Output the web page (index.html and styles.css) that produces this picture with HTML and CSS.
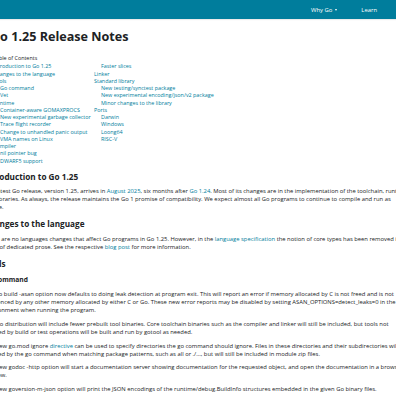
FILE: index.html
```html
<!DOCTYPE html>
<html lang="en">
<head>
    <meta charset="UTF-8">
    <meta name="viewport" content="width=device-width, initial-scale=1.0">
    <title>Go 1.25 Release Notes</title>
    <link rel="stylesheet" href="styles.css">
</head>
<body>
    <header class="site-header">
        <nav class="header-nav">
            <a class="nav-item" href="#">Why Go <span class="caret"></span></a>
            <a class="nav-item" href="#">Learn</a>
            <a class="nav-item" href="#">Docs <span class="caret"></span></a>
            <a class="nav-item" href="#">Packages</a>
        </nav>
    </header>

    <main class="article">
        <h1 class="title">Go 1.25 Release Notes</h1>

        <div class="toc">
            <div class="toc-label">Table of Contents</div>
            <div class="toc-columns">
                <ul class="toc-list">
                    <li><a href="#">Introduction to Go 1.25</a></li>
                    <li><a href="#">Changes to the language</a></li>
                    <li><a href="#">Tools</a></li>
                    <li class="sub"><a href="#">Go command</a></li>
                    <li class="sub"><a href="#">Vet</a></li>
                    <li><a href="#">Runtime</a></li>
                    <li class="sub"><a href="#">Container-aware GOMAXPROCS</a></li>
                    <li class="sub"><a href="#">New experimental garbage collector</a></li>
                    <li class="sub"><a href="#">Trace flight recorder</a></li>
                    <li class="sub"><a href="#">Change to unhandled panic output</a></li>
                    <li class="sub"><a href="#">VMA names on Linux</a></li>
                    <li><a href="#">Compiler</a></li>
                    <li class="sub"><a href="#">nil pointer bug</a></li>
                    <li class="sub"><a href="#">DWARF5 support</a></li>
                </ul>
                <ul class="toc-list">
                    <li class="sub"><a href="#">Faster slices</a></li>
                    <li><a href="#">Linker</a></li>
                    <li><a href="#">Standard library</a></li>
                    <li class="sub"><a href="#">New testing/synctest package</a></li>
                    <li class="sub"><a href="#">New experimental encoding/json/v2 package</a></li>
                    <li class="sub"><a href="#">Minor changes to the library</a></li>
                    <li><a href="#">Ports</a></li>
                    <li class="sub"><a href="#">Darwin</a></li>
                    <li class="sub"><a href="#">Windows</a></li>
                    <li class="sub"><a href="#">Loong64</a></li>
                    <li class="sub"><a href="#">RISC-V</a></li>
                </ul>
            </div>
        </div>

        <section class="notes">
            <h2>Introduction to Go 1.25</h2>
            <p>The latest Go release, version 1.25, arrives in <a href="#">August 2025</a>, six months after <a href="#">Go 1.24</a>. Most of its changes are in the implementation of the toolchain, runtime, and libraries. As always, the release maintains the Go 1 promise of compatibility. We expect almost all Go programs to continue to compile and run as before.</p>

            <h2>Changes to the language</h2>
            <p>There are no languages changes that affect Go programs in Go 1.25. However, in the <a href="#">language specification</a> the notion of core types has been removed in favor of dedicated prose. See the respective <a href="#">blog post</a> for more information.</p>

            <h2>Tools</h2>
            <h3>Go command</h3>
            <p>The go build -asan option now defaults to doing leak detection at program exit. This will report an error if memory allocated by C is not freed and is not referenced by any other memory allocated by either C or Go. These new error reports may be disabled by setting ASAN_OPTIONS=detect_leaks=0 in the environment when running the program.</p>
            <p>The Go distribution will include fewer prebuilt tool binaries. Core toolchain binaries such as the compiler and linker will still be included, but tools not invoked by build or test operations will be built and run by gotool as needed.</p>
            <p>The new go.mod ignore <a href="#">directive</a> can be used to specify directories the go command should ignore. Files in these directories and their subdirectories will be ignored by the go command when matching package patterns, such as all or ./..., but will still be included in module zip files.</p>
            <p>The new godoc -http option will start a documentation server showing documentation for the requested object, and open the documentation in a browser window.</p>
            <p>The new goversion-m-json option will print the JSON encodings of the runtime/debug.BuildInfo structures embedded in the given Go binary files.</p>
        </section>
    </main>
</body>
</html>
```

FILE: styles.css
```css
/* Page reset */
html, body {
    margin: 0;
    padding: 0;
    overflow: hidden;
    height: 100%;
}

body {
    font-family: 'Open Sans', 'Liberation Sans', sans-serif;
    color: #202224;
    background: #fff;
}

a {
    color: #007d9c;
    text-decoration: none;
}

/* Top bar */
.site-header {
    background-color: #007d9c;
    height: 19px;
    display: flex;
    align-items: center;
    box-shadow: 0 1px 1px rgba(0, 0, 0, 0.08);
}

.header-nav {
    display: flex;
    align-items: center;
    gap: 24px;
    padding-left: 311px;
    white-space: nowrap;
}

.nav-item {
    color: #fff;
    font-size: 5.9px;
    display: flex;
    align-items: center;
}

.caret {
    display: inline-block;
    margin-left: 3px;
    border-left: 1.7px solid transparent;
    border-right: 1.7px solid transparent;
    border-top: 2px solid #fff;
}

/* Article */
.article {
    margin-left: -16px;
    width: 426px;
}

.title {
    margin: 10px 0 0 7px;
    font-size: 12.6px;
    line-height: 15px;
    font-weight: 700;
}

/* Table of contents */
.toc {
    margin: 11px 0 0 9px;
    font-size: 5.4px;
    line-height: 7.25px;
}

.toc-label {
    margin-bottom: 1px;
}

.toc-columns {
    display: flex;
}

.toc-list {
    list-style: none;
    margin: 0;
    padding: 0;
    width: 101px;
    white-space: nowrap;
}

.toc-list .sub {
    padding-left: 7px;
}

/* Notes body */
.notes {
    font-size: 5.85px;
    line-height: 8px;
}

.notes h2 {
    font-size: 8.2px;
    line-height: 11px;
    font-weight: 700;
    margin: 7px 0 5.5px;
}

.notes h2:first-child {
    margin-top: 6px;
}

.notes h3 {
    font-size: 6.67px;
    line-height: 9px;
    font-weight: 700;
    margin: 6px 0 6.5px;
}

.notes p {
    margin: 0 0 5.7px;
}
```
